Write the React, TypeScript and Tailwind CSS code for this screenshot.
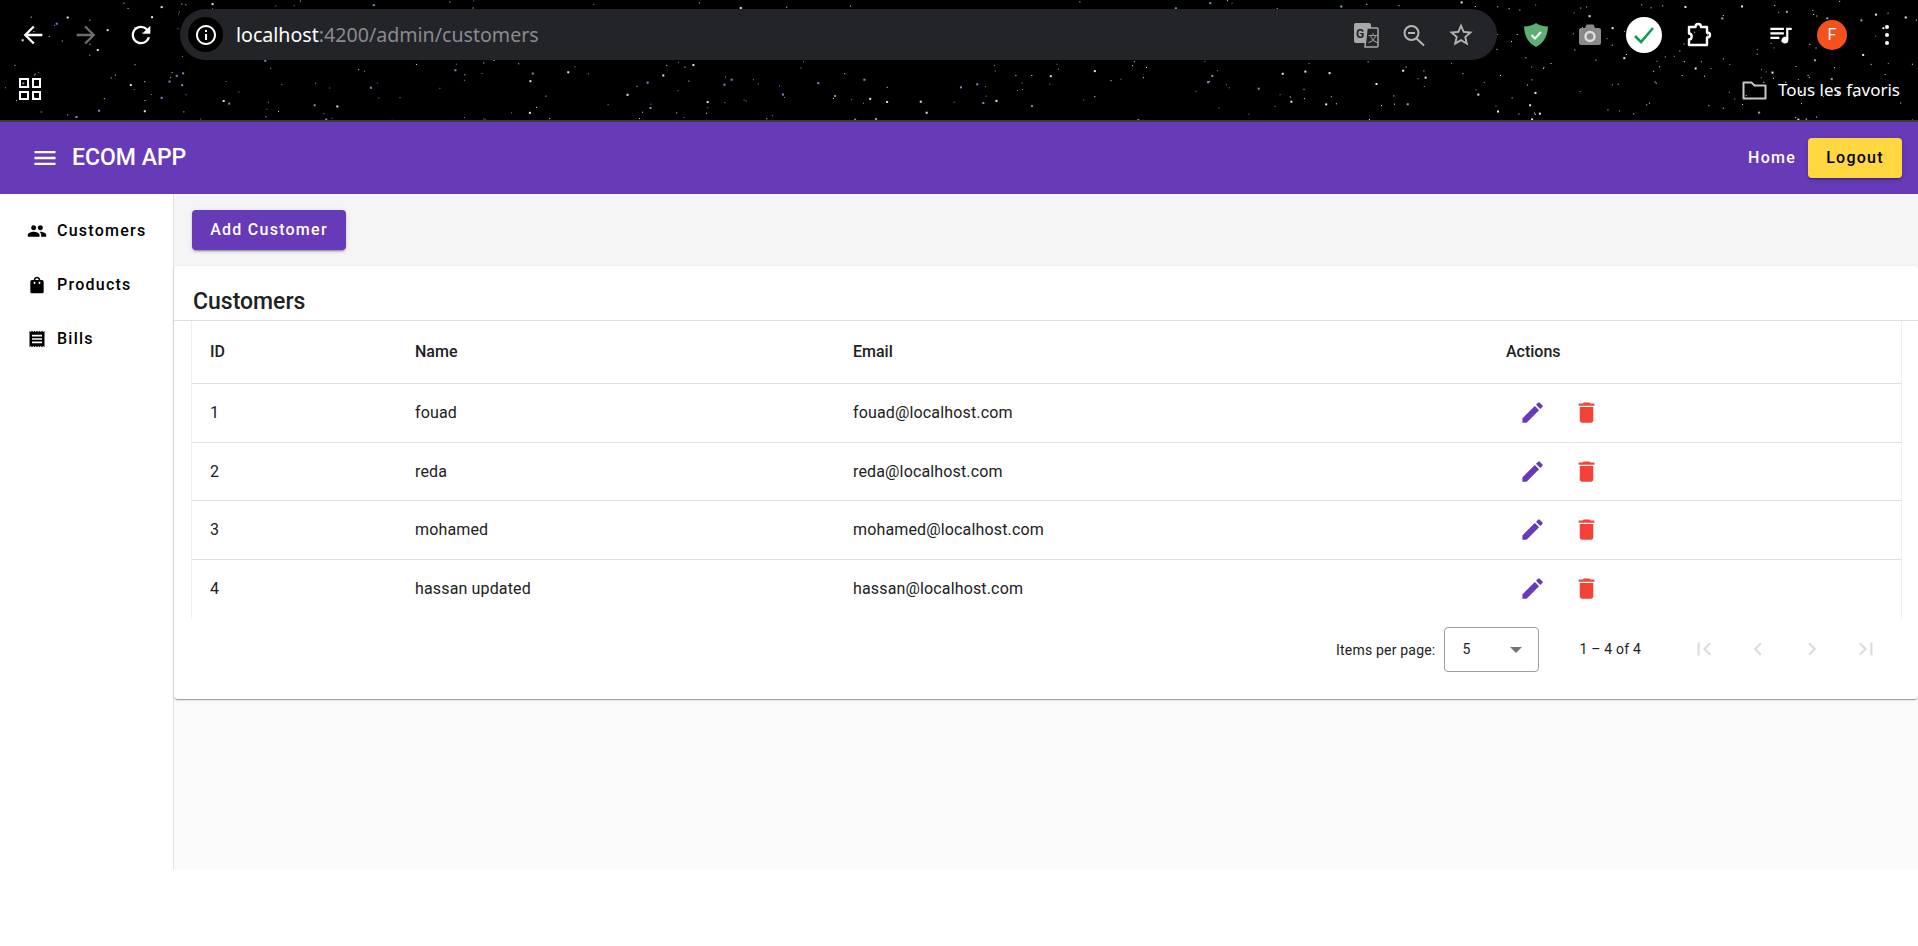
import React from "react";
import {
  MdPeople, MdShoppingBag, MdReceipt, MdMenu, MdEdit, MdDelete, MdArrowBack, MdArrowForward, MdRefresh,
  MdInfoOutline, MdStarBorder, MdQueueMusic, MdFirstPage, MdLastPage,
  MdChevronLeft, MdChevronRight,
} from "react-icons/md";

const stars = (() => {
  let s = 12345;
  const r = () => ((s = (s * 16807) % 2147483647) / 2147483647);
  const out: { x: number; y: number; w: number; c: string }[] = [];
  for (let i = 0; i < 620; i++) {
    const x = r() * 1918;
    const right = x > 1280 || r() > 0.55;
    if (!right && r() > 0.6) continue;
    const c = r();
    out.push({
      x,
      y: r() * 120,
      w: r() > 0.75 ? 2 : 1,
      c: x > 1280 ? (c > 0.3 ? "#e8ecf5" : "#8fa8d0") : c > 0.6 ? "#dfe6f2" : "#6f95cf",
    });
  }
  return out;
})();

const customers = [
  { id: 1, name: "fouad", email: "fouad@localhost.com", row: "h-[59px]", cell: "border-b border-[#e0e0e0]" },
  { id: 2, name: "reda", email: "reda@localhost.com", row: "h-[58px]", cell: "border-b border-[#e0e0e0]" },
  { id: 3, name: "mohamed", email: "mohamed@localhost.com", row: "h-[59px]", cell: "border-b border-[#e0e0e0]" },
  { id: 4, name: "hassan updated", email: "hassan@localhost.com", row: "h-[57px]", cell: "" },
];

function NavItem({ icon, label }: { icon: React.ReactNode; label: string }) {
  return (
    <div className="h-[54px] flex items-center pl-[27px] gap-[10px] text-[16px] font-medium tracking-[1.25px] text-black">
      <span className="w-[20px] flex justify-center">{icon}</span>
      <span>{label}</span>
    </div>
  );
}

function Box({ className, children }: { className?: string; children: React.ReactNode }) {
  return <div className={`w-[36px] h-[36px] flex items-center justify-center shrink-0 ${className ?? ""}`}>{children}</div>;
}

export default function App() {
  return (
    <div className="w-[1918px] h-[946px] bg-white overflow-hidden font-['Roboto',sans-serif] text-[#212121]">
      {/* browser chrome */}
      <div className="relative h-[120px] bg-black overflow-hidden">
        <svg className="absolute inset-0" width="1918" height="120">
          {stars.map((d, i) => (
            <rect key={i} x={d.x} y={d.y} width={d.w} height={d.w} fill={d.c} />
          ))}
        </svg>
        <div className="relative h-[68px] flex items-center pl-[15px] pt-[1px]">
          <Box><MdArrowBack size={28} color="#fff" /></Box>
          <Box className="ml-[17px]"><MdArrowForward size={28} color="#6e6e6e" /></Box>
          <Box className="ml-[19px]"><MdRefresh size={28} color="#fff" /></Box>
          <div className="ml-[21px] w-[1317px] h-[51px] rounded-full bg-[#232428] flex items-center pl-[8px] pr-[20px] font-['Noto_Sans',sans-serif] text-[19.6px]">
            <div className="w-[35px] h-[35px] rounded-full bg-black flex items-center justify-center">
              <MdInfoOutline size={24} color="#fff" />
            </div>
            <span className="ml-[13px] text-white">localhost</span>
            <span className="text-[#8a8b8e]">:4200/admin/customers</span>
            <div className="ml-auto flex items-center">
              <svg width="26" height="26" viewBox="0 0 26 26" className="mr-[23px]">
                <rect x="1" y="1" width="17" height="20" rx="2" fill="#a8a8a8" />
                <path d="M14 6h10a1 1 0 0 1 1 1v17a1 1 0 0 1-1 1H12z" fill="#232428" stroke="#a8a8a8" strokeWidth="1.5" />
                <text x="3" y="15.500" fontSize="12" fontWeight="700" fill="#232428" fontFamily="Roboto">G</text>
                <text x="15" y="20" fontSize="10" fill="#a8a8a8" fontFamily="'Noto Sans CJK SC',sans-serif">文</text>
              </svg>
              <svg width="26" height="26" viewBox="0 0 26 26" fill="none" stroke="#b4b4b4" strokeWidth="2" className="mr-[19px]">
                <circle cx="9.500" cy="11" r="7" />
                <path d="M6 11h7M14.500 16.500l7.500 7" />
              </svg>
              <MdStarBorder size={28} color="#b4b4b4" className="mr-[2px]" />
            </div>
          </div>
          <Box className="ml-[21px]">
            <svg width="26" height="26" viewBox="0 0 26 26">
              <path d="M13 1C10 3 6 4.500 1 4.500 1.500 14 5 21 13 25 21 21 24.500 14 25 4.500 20 4.500 16 3 13 1z" fill="#5fae72" />
              <path d="M8.500 13l3.500 3.500 6-6.500" fill="none" stroke="#fff" strokeWidth="2" />
            </svg>
          </Box>
          <Box className="ml-[18px]">
            <svg width="24" height="22" viewBox="0 0 24 22">
              <path d="M3 4h4l1.500-3.500h7L17 4h4a2 2 0 0 1 2 2v13a2 2 0 0 1-2 2H3a2 2 0 0 1-2-2V6a2 2 0 0 1 2-2z" fill="#8a8a8a" />
              <circle cx="12" cy="12.500" r="4.500" fill="#8a8a8a" stroke="#dcdcdc" strokeWidth="2.500" />
            </svg>
          </Box>
          <Box className="ml-[18px] rounded-full bg-white">
            <svg width="22" height="18" viewBox="0 0 22 18" fill="none" stroke="#0f9d58" strokeWidth="2.600"><path d="M2 10l6 6L20 2" /></svg>
          </Box>
          <Box className="ml-[19px]">
            <svg width="26" height="26" viewBox="0 0 26 26" fill="none" stroke="#fff" strokeWidth="2.400" strokeLinejoin="round">
              <path d="M3 5h6.500c0-4 5.500-4 5.500 0H21v5.500c4 0 4 5 0 5V23H3v-5.500c3.500 0 3.500-6 0-6z" />
            </svg>
          </Box>
          <Box className="ml-[45px]"><MdQueueMusic size={27} color="#fff" /></Box>
          <Box className="ml-[16px]">
            <div className="w-[30px] h-[30px] rounded-full bg-[#f4511e] text-white text-[16px] flex items-center justify-center">F</div>
          </Box>
          <Box className="ml-[19px]">
            <div className="flex flex-col gap-[4px]">
              <div className="w-[4px] h-[4px] rounded-full bg-white" />
              <div className="w-[4px] h-[4px] rounded-full bg-white" />
              <div className="w-[4px] h-[4px] rounded-full bg-white" />
            </div>
          </Box>
        </div>
        <div className="relative h-[52px] flex items-start pt-[10px] pl-[19px] pr-[18px]">
          <div className="grid grid-cols-2 gap-[3px] w-[22px] h-[22px]">
            <div className="border-[2.5px] border-white" />
            <div className="border-[2.5px] border-white" />
            <div className="border-[2.5px] border-white" />
            <div className="border-[2.5px] border-white" />
          </div>
          <div className="ml-auto flex items-center h-[24px] font-['Noto_Sans',sans-serif] text-[17px] text-white">
            <svg width="25" height="19" viewBox="0 0 25 19" fill="none" stroke="#c8c8c8" strokeWidth="2" strokeLinejoin="round">
              <path d="M1.500 1.500h8l3 3h11v13h-22z" />
            </svg>
            <span className="ml-[11px]">Tous les favoris</span>
          </div>
        </div>
      </div>
      <div className="h-[2px] bg-[#3c3c3c]" />

      {/* app toolbar */}
      <header className="h-[72px] bg-[#673ab7] flex items-center text-white pl-[31px] pr-[16px]">
        <MdMenu size={28} color="#fff" />
        <span className="ml-[13px] text-[23px] font-medium">ECOM APP</span>
        <span className="ml-auto text-[16px] font-medium tracking-[1.25px]">Home</span>
        <button className="ml-[12px] w-[94px] h-[40px] rounded-[4px] bg-[#ffd740] text-[16px] font-medium tracking-[1.25px] text-black shadow-[0_3px_1px_-2px_rgba(0,0,0,.2),0_2px_2px_0_rgba(0,0,0,.14),0_1px_5px_0_rgba(0,0,0,.12)]">
          Logout
        </button>
      </header>

      <div className="flex h-[675px]">
        <aside className="w-[174px] shrink-0 bg-white border-r border-[#e0e0e0] pt-[10px]">
          <NavItem icon={<MdPeople size={20} color="#000" />} label="Customers" />
          <NavItem icon={<MdShoppingBag size={20} color="#000" />} label="Products" />
          <NavItem icon={<MdReceipt size={20} color="#000" />} label="Bills" />
        </aside>
        <main className="flex-1 bg-[#fafafa] min-w-0">
          <div className="h-[72px] bg-[#f5f5f5] pl-[18px] pt-[16px]">
            <button className="w-[154px] h-[40px] rounded-[4px] bg-[#673ab7] text-white text-[16px] font-medium tracking-[1.25px] shadow-[0_3px_1px_-2px_rgba(0,0,0,.2),0_2px_2px_0_rgba(0,0,0,.14),0_1px_5px_0_rgba(0,0,0,.12)]">
              Add Customer
            </button>
          </div>
          <section className="h-[433px] bg-white rounded-[4px] shadow-[0_2px_1px_-1px_rgba(0,0,0,.2),0_1px_1px_0_rgba(0,0,0,.14),0_1px_3px_0_rgba(0,0,0,.12)]">
            <div className="h-[55px] border-b border-[#e0e0e0] pl-[19px] pt-[21px] text-[23px] leading-[30px] font-medium text-[#212121] overflow-hidden">
              Customers
            </div>
            <div className="ml-[17px] mr-[16px] border-x border-[#efefef] pb-[2px]">
              <table className="w-full table-fixed border-separate border-spacing-0 text-[16px] tracking-[0.15px]">
                <colgroup>
                  <col className="w-[205px]" />
                  <col className="w-[438px]" />
                  <col className="w-[653px]" />
                  <col />
                </colgroup>
                <thead>
                  <tr className="h-[63px] text-left">
                    <th className="pl-[18px] font-medium tracking-normal border-b border-[#e0e0e0]">ID</th>
                    <th className="pl-[18px] font-medium tracking-normal border-b border-[#e0e0e0]">Name</th>
                    <th className="pl-[18px] font-medium tracking-normal border-b border-[#e0e0e0]">Email</th>
                    <th className="pl-[18px] font-medium tracking-normal border-b border-[#e0e0e0]">Actions</th>
                  </tr>
                </thead>
                <tbody>
                  {customers.map((c) => (
                    <tr key={c.id} className={c.row}>
                      <td className={`pl-[18px] ${c.cell}`}>{c.id}</td>
                      <td className={`pl-[18px] ${c.cell}`}>{c.name}</td>
                      <td className={`pl-[18px] ${c.cell}`}>{c.email}</td>
                      <td className={`pl-[17px] ${c.cell}`}>
                        <div className="flex items-center pl-[14px] gap-[27px] pb-[1px]">
                          <MdEdit size={27} color="#673ab7" />
                          <MdDelete size={27} color="#f44336" />
                        </div>
                      </td>
                    </tr>
                  ))}
                </tbody>
              </table>
            </div>
            <div className="h-[80px] flex items-start pt-[8px] justify-end pr-[39px] text-[14px] tracking-[0.2px] text-[#212121]">
              <span className="mt-[13px]">Items per page:</span>
              <div className="ml-[9px] w-[95px] h-[45px] border border-[#9e9e9e] rounded-[4px] flex items-center pl-[17px] pr-[16px]">
                <span>5</span>
                <span className="ml-auto w-0 h-0 border-x-[6px] border-x-transparent border-t-[6px] border-t-[#757575]" />
              </div>
              <span className="ml-[40px] mt-[12px]">1 – 4 of 4</span>
              <div className="ml-[50px] mt-[9px] flex items-center gap-[28px] text-[#dcdcdc]">
                <MdFirstPage size={26} />
                <MdChevronLeft size={26} />
                <MdChevronRight size={26} />
                <MdLastPage size={26} />
              </div>
            </div>
          </section>
        </main>
      </div>
    </div>
  );
}
